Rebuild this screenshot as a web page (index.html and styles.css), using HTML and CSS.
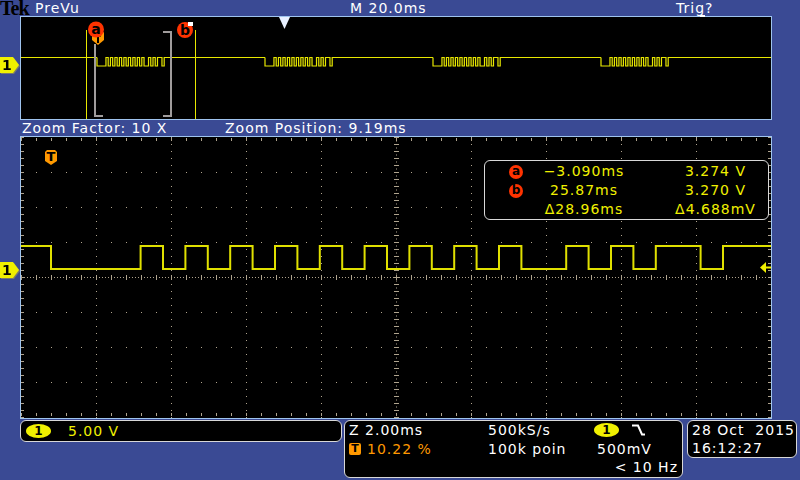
FILE: index.html
```html
<!DOCTYPE html>
<html>
<head>
<meta charset="utf-8">
<title>Tek PreVu</title>
<link rel="stylesheet" href="styles.css">
</head>
<body>
<div class="screen">
  <header class="topbar">
    <span class="logo">Tek</span>
    <span class="mode">PreVu</span>
    <span class="timebase">M 20.0ms</span>
    <span class="trig">Trig?</span>
  </header>

  <section class="overview-row">
    <div class="marker-wrap ov-marker"><div class="ch-marker">1</div></div>
    <div class="panel overview">
      <svg width="750" height="102" viewBox="21 17 750 102">
        <path class="wave-ov" d="M21 57.5H97"/>
        <path class="wave-ov" transform="translate(97 57.5) scale(2.24 8.5)" d="M0 0V1H4V0H5V1H6V0H7V1H8V0H9V1H10V0H11V1H12V0H13V1H14V0H15V1H16V0H17V1H18V0H19V1H20V0H21V1H23V0H24V1H25V0H26V1H27V0H29V1H30V0H75"/>
        <path class="wave-ov" transform="translate(265 57.5) scale(2.24 8.5)" d="M0 0V1H4V0H5V1H6V0H7V1H8V0H9V1H10V0H11V1H12V0H13V1H14V0H15V1H16V0H17V1H18V0H19V1H20V0H21V1H23V0H24V1H25V0H26V1H27V0H29V1H30V0H75"/>
        <path class="wave-ov" transform="translate(433 57.5) scale(2.24 8.5)" d="M0 0V1H4V0H5V1H6V0H7V1H8V0H9V1H10V0H11V1H12V0H13V1H14V0H15V1H16V0H17V1H18V0H19V1H20V0H21V1H23V0H24V1H25V0H26V1H27V0H29V1H30V0H75"/>
        <path class="wave-ov" transform="translate(601 57.5) scale(2.24 8.5)" d="M0 0V1H4V0H5V1H6V0H7V1H8V0H9V1H10V0H11V1H12V0H13V1H14V0H15V1H16V0H17V1H18V0H19V1H20V0H21V1H23V0H24V1H25V0H26V1H27V0H29V1H30V0H76"/>
        <path class="bracket" d="M95 44V116H103M163 32H171V116H163"/>
        <path class="cursor-line" d="M86.5 30V119M195.5 30V119"/>
        <path class="tmark-shape" d="M93 32H103Q104 32 104 33V40L98 45L92 40V33Q92 32 93 32Z"/>
        <path class="tmark-glyph" d="M95 35.5H101M98 35.5V43"/>
        <circle class="cur-dot" cx="96" cy="29.5" r="8"/>
        <text class="cur-lbl" x="96" y="34">a</text>
        <circle class="cur-dot" cx="185" cy="30" r="8"/>
        <text class="cur-lbl" x="185" y="34.5">b</text>
        <rect class="cur-flag" x="188" y="22" width="5" height="4"/>
        <polygon class="trig-pos" points="279,17 290,17 284.5,29"/>
      </svg>
      <span class="border-flag"></span>
    </div>
  </section>

  <div class="zoombar">
    <span class="zf">Zoom Factor: 10 X</span>
    <span class="zp">Zoom Position: 9.19ms</span>
  </div>

  <section class="main-row">
    <div class="marker-wrap main-marker"><div class="ch-marker">1</div></div>
    <div class="panel graticule">
      <svg width="750" height="281" viewBox="21 137 750 281">
        <path class="dots15" d="M21 172.5H771M21 207.5H771M21 242.5H771M21 312.5H771M21 347.5H771M21 382.5H771"/>
        <path class="dots7" d="M96.5 137V418M171.5 137V418M246.5 137V418M321.5 137V418M471.5 137V418M546.5 137V418M621.5 137V418M696.5 137V418"/>
        <path class="dense-h" d="M21 277.5H771"/>
        <path class="dense-v" d="M396.5 137V418"/>
        <path class="tick-h" d="M21 277.5H771"/>
        <path class="tick-v" d="M396.5 137V418"/>
        <path class="edge-v" d="M22.5 137V418M769.5 137V418"/>
        <path class="edge-h" d="M21 139.5H771M21 414.5H771"/>
        <path class="wave" transform="translate(51 246) scale(22.4 23)" d="M-1.4 0H0V1H4V0H5V1H6V0H7V1H8V0H9V1H10V0H11V1H12V0H13V1H14V0H15V1H16V0H17V1H18V0H19V1H20V0H21V1H23V0H24V1H25V0H26V1H27V0H29V1H30V0H32.2"/>
        <polygon class="trig-level" points="760,267.5 766,262 766,273"/>
        <path class="trig-stub" d="M765 267.5H771"/>
      </svg>
      <div class="tmarker">T</div>
      <div class="readout">
        <span class="cdot">a</span><span class="rt">−3.090ms</span><span class="rv">3.274 V</span>
        <span class="cdot">b</span><span class="rt">25.87ms</span><span class="rv">3.270 V</span>
        <span></span><span class="rt">Δ28.96ms</span><span class="rv">Δ4.688mV</span>
      </div>
    </div>
  </section>

  <footer class="status">
    <div class="box chbox">
      <span class="pill">1</span><span class="vdiv">5.00 V</span>
    </div>
    <div class="box hbox">
      <span class="cell">Z 2.00ms</span>
      <span class="cell">500kS/s</span>
      <span class="cell">
        <span class="pill">1</span>
        <svg class="slope" width="13" height="12" viewBox="0 0 13 12"><path d="M0 1.5H6L10 10.5H13"/></svg>
      </span>
      <span class="cell orange"><span class="ticon">T</span>10.22 %</span>
      <span class="cell">100k poin</span>
      <span class="cell lvl">500mV</span>
      <span class="cell"></span>
      <span class="cell"></span>
      <span class="cell freq">&lt; 10 Hz</span>
    </div>
    <div class="box datebox">28 Oct  2015
16:12:27</div>
  </footer>
</div>
</body>
</html>
```

FILE: styles.css
```css
* { box-sizing: border-box; }
html, body { margin: 0; padding: 0; }
body {
  background: #3a4a94;
  width: 800px;
  height: 480px;
  overflow: hidden;
  font-family: "DejaVu Sans", Verdana, sans-serif;
  font-size: 14px;
  letter-spacing: 1px;
  color: #ffffff;
}
.screen {
  width: 800px;
  height: 480px;
  display: flex;
  flex-direction: column;
}

/* top bar */
.topbar {
  height: 16px;
  display: grid;
  grid-template-columns: 35px 315px 326px 1fr;
  line-height: 16px;
  white-space: nowrap;
}
.logo {
  font-family: "Liberation Serif", "Times New Roman", serif;
  font-weight: bold;
  font-size: 20px;
  line-height: 16px;
  color: #000;
  letter-spacing: -1px;
}

/* panels */
.panel {
  border: 1px solid #9fc4ee;
  background: #000;
  position: relative;
}
.panel svg { display: block; }
.overview-row {
  position: relative;
  height: 104px;
  padding-left: 20px;
}
.overview { width: 752px; height: 104px; }
.border-flag {
  position: absolute;
  left: 679px;
  top: -2px;
  width: 5px;
  height: 2px;
  background: #ffffff;
}

.zoombar {
  height: 16px;
  line-height: 16px;
  padding-left: 22px;
  display: flex;
  white-space: nowrap;
}
.zoombar .zf { width: 203px; }

.main-row {
  position: relative;
  height: 283px;
  padding-left: 20px;
}
.graticule { width: 752px; height: 283px; }

/* channel markers */
.marker-wrap {
  position: absolute;
  left: 0;
  filter: drop-shadow(1px 1px 0 #7a7a6a);
}
.ov-marker { top: 41px; }
.main-marker { top: 126px; }
.ch-marker {
  width: 19px;
  height: 16px;
  background: #f0f000;
  color: #000;
  clip-path: polygon(0 0, 13px 0, 19px 8px, 13px 16px, 0 16px);
  font-size: 14px;
  font-weight: bold;
  line-height: 16px;
  padding-left: 2px;
  letter-spacing: 0;
}

/* svg styling */
.wave-ov {
  fill: none;
  stroke: #e8e800;
  stroke-width: 1.2;
  vector-effect: non-scaling-stroke;
}
.wave {
  fill: none;
  stroke: #e0e000;
  stroke-width: 2;
  vector-effect: non-scaling-stroke;
}
.bracket { fill: none; stroke: #a09c9c; stroke-width: 2; }
.cursor-line { fill: none; stroke: #e8e800; stroke-width: 1; }
.tmark-shape { fill: #ff9900; }
.tmark-glyph { fill: none; stroke: #000; stroke-width: 2; }
.cur-dot { fill: #ff3300; }
.cur-lbl {
  fill: #000;
  font-family: "DejaVu Sans", sans-serif;
  font-weight: bold;
  font-size: 14px;
  letter-spacing: 0;
  text-anchor: middle;
}
.cur-flag { fill: #ffffff; }
.trig-pos { fill: #e8f0ff; }

.dots15 { fill: none; stroke: #b0a48e; stroke-width: 1; stroke-dasharray: 1 14; }
.dots7 { fill: none; stroke: #b0a48e; stroke-width: 1; stroke-dasharray: 1 6; }
.dense-h { fill: none; stroke: #b0a48e; stroke-width: 1; stroke-dasharray: 1 2; }
.dense-v { fill: none; stroke: #b0a48e; stroke-width: 1; stroke-dasharray: 1 2.5; }
.tick-h { fill: none; stroke: #b0a48e; stroke-width: 5; stroke-dasharray: 1 14; }
.tick-v { fill: none; stroke: #b0a48e; stroke-width: 5; stroke-dasharray: 1 6; }
.edge-v { fill: none; stroke: #b0a48e; stroke-width: 3; stroke-dasharray: 1 6; }
.edge-h { fill: none; stroke: #b0a48e; stroke-width: 3; stroke-dasharray: 1 14; }
.trig-level { fill: #f0f000; }
.trig-stub { fill: none; stroke: #f0f000; stroke-width: 2; }

/* trigger marker in main view */
.tmarker {
  position: absolute;
  left: 24px;
  top: 13px;
  width: 12px;
  height: 15px;
  background: #ff9900;
  color: #000;
  clip-path: polygon(0 2px, 2px 0, 10px 0, 12px 2px, 12px 11px, 6px 15px, 0 11px);
  font-weight: bold;
  font-size: 13px;
  line-height: 13px;
  text-align: center;
  letter-spacing: 0;
}

/* cursor readout */
.readout {
  position: absolute;
  left: 463px;
  top: 23px;
  width: 285px;
  height: 60px;
  border: 1px solid #d8d8d8;
  border-radius: 6px;
  background: #000;
  padding: 1px 0 0 24px;
  display: grid;
  grid-template-columns: 14px 122px 125px;
  grid-auto-rows: 19px;
  line-height: 19px;
  color: #f0f000;
  white-space: nowrap;
}
.cdot {
  align-self: center;
  width: 14px;
  height: 14px;
  border-radius: 50%;
  background: #ff3300;
  color: #000;
  font-weight: bold;
  font-size: 12px;
  line-height: 13px;
  text-align: center;
  letter-spacing: 0;
}
.rt { text-align: center; }
.rv { text-align: center; padding-left: 16px; }

/* status bar */
.status {
  display: flex;
  align-items: flex-start;
  padding-left: 20px;
  margin-top: 1px;
  white-space: nowrap;
}
.box {
  border: 1px solid #d8d8d8;
  border-radius: 6px;
  background: #000;
}
.chbox {
  width: 322px;
  height: 22px;
  display: flex;
  align-items: center;
  padding-left: 5px;
  color: #f0f000;
  line-height: 19px;
}
.pill {
  display: inline-block;
  width: 25px;
  height: 14px;
  border-radius: 50%;
  background: #f0f000;
  color: #000;
  font-size: 12px;
  font-weight: bold;
  line-height: 14px;
  text-align: center;
  letter-spacing: 0;
}
.chbox .pill { margin-right: 17px; }
.hbox {
  width: 339px;
  height: 58px;
  margin-left: 2px;
  padding: 0 4px;
  display: grid;
  grid-template-columns: 139px 106px 1fr;
  grid-auto-rows: 18.7px;
  line-height: 18.7px;
}
.cell { display: flex; align-items: center; }
.slope { margin-left: 13px; }
.slope path { fill: none; stroke: #ffffff; stroke-width: 2; }
.orange { color: #ff9900; }
.ticon {
  display: inline-block;
  width: 12px;
  height: 12px;
  border-radius: 2px;
  background: #ff9900;
  color: #000;
  font-weight: bold;
  font-size: 11px;
  line-height: 12px;
  text-align: center;
  letter-spacing: 0;
  margin-right: 6px;
}
.lvl { padding-left: 3px; }
.freq { justify-content: flex-end; }
.datebox {
  width: 110px;
  height: 38px;
  margin-left: 4px;
  padding-left: 4px;
  line-height: 18px;
  white-space: pre;
}
```
